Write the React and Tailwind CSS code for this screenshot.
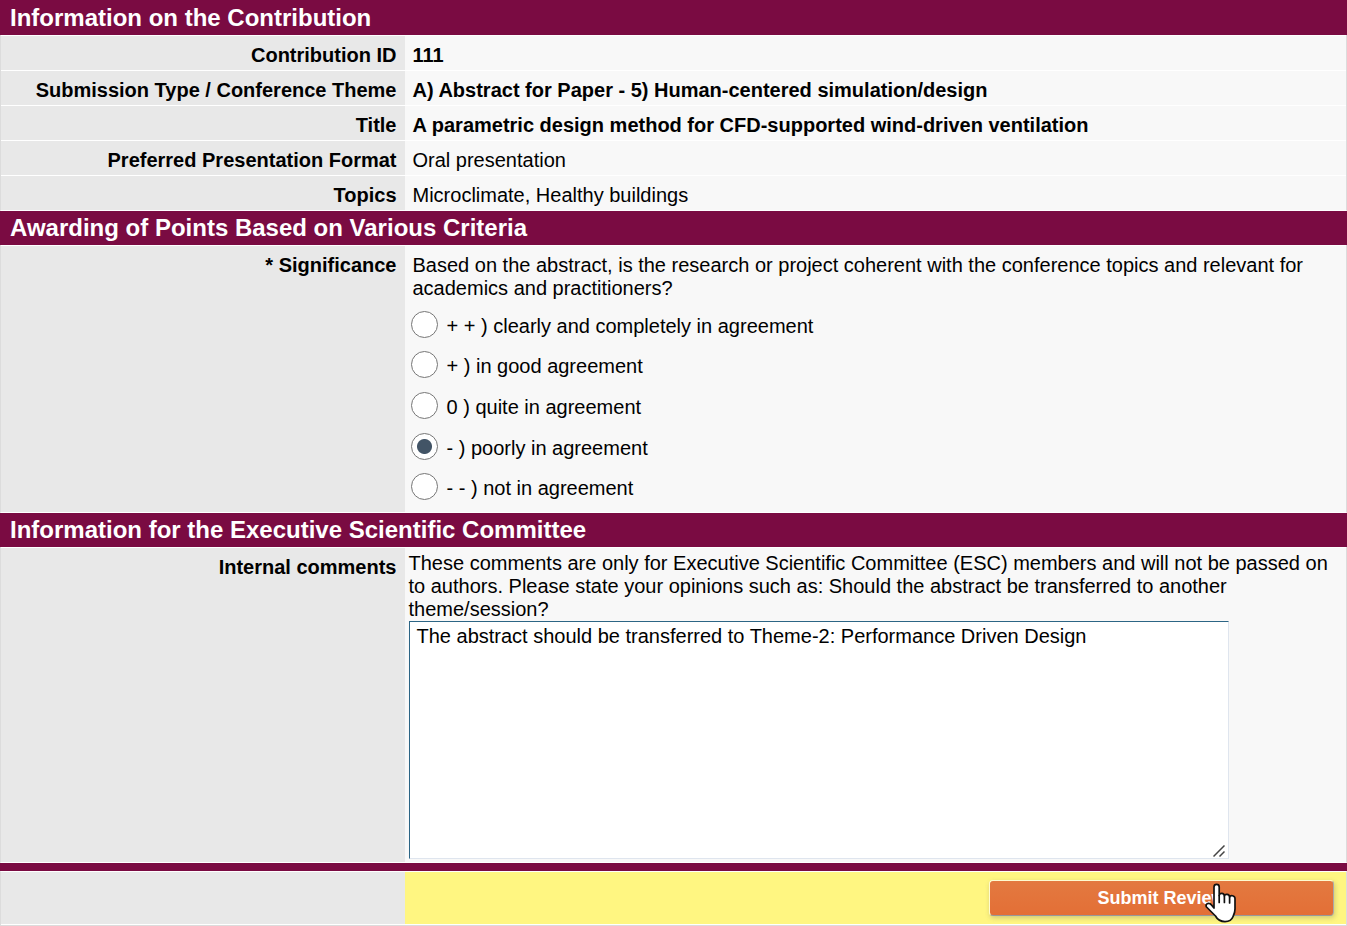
import React from "react";

const details = [
  { label: "Contribution ID", value: "111", strong: true },
  {
    label: "Submission Type / Conference Theme",
    value: "A) Abstract for Paper - 5) Human-centered simulation/design",
    strong: true,
  },
  {
    label: "Title",
    value: "A parametric design method for CFD-supported wind-driven ventilation",
    strong: true,
  },
  { label: "Preferred Presentation Format", value: "Oral presentation" },
  { label: "Topics", value: "Microclimate, Healthy buildings" },
];

const ratings = [
  "+ + ) clearly and completely in agreement",
  "+ ) in good agreement",
  "0 ) quite in agreement",
  "- ) poorly in agreement",
  "- - ) not in agreement",
];

function SectionTitle({ children }) {
  return (
    <h2 className="bg-[#7a0b42] px-2.5 py-px text-2xl leading-8 font-bold text-white">
      {children}
    </h2>
  );
}

function Frame({ children }) {
  return <div className="border-x border-b border-x-[#dcdcdc] border-b-white">{children}</div>;
}

function HandCursor() {
  return (
    <svg
      aria-hidden="true"
      className="pointer-events-none absolute top-[3px] left-[216px] h-10 w-8"
      viewBox="0 0 32 40"
      fill="white"
      stroke="#111"
      strokeWidth="1.7"
      strokeLinejoin="round"
      strokeLinecap="round"
    >
      <path d="M9 23V4C9 .6 14.200.6 14.200 4v8.500c.3-2.800 5-2.800 5.200.4.500-2.300 5-2 5.200 1 .6-2 5.400-1.700 5.400 1.600V26c0 3-.8 5-1.800 7.200-1.400 3.800-4.400 5.400-8.200 5.400-4.200 0-7.500-1.800-9.500-5.600L1.500 24c-1.400-2.500 1.500-4.600 3.700-3.200C6.800 22 7.800 23.500 9 25z" />
      <path d="M14.200 12.500v7M19.400 13v6.500M24.600 14v6" fill="none" />
    </svg>
  );
}

export default function App() {
  return (
    <form
      className="w-full bg-white font-['Liberation_Sans',Arial,sans-serif] text-xl leading-[23px] text-black"
      onSubmit={(e) => e.preventDefault()}
    >
      <section>
        <h2 className="bg-[#7a0b42] px-2.5 pt-0.5 pb-px text-2xl leading-8 font-bold text-white">
          Information on the Contribution
        </h2>
        <Frame>
          <table className="w-full table-fixed border-collapse">
            <tbody>
              {details.map((d) => (
                <tr key={d.label} className="border-t border-white">
                  <th
                    scope="row"
                    className="w-[30%] bg-[#e8e8e8] pt-2 pr-2 pb-[3px] text-right font-bold"
                  >
                    {d.label}
                  </th>
                  <td
                    className={
                      d.strong
                        ? "bg-[#f8f8f8] px-2 pt-2 pb-[3px] font-bold"
                        : "bg-[#f8f8f8] px-2 pt-2 pb-[3px]"
                    }
                  >
                    {d.value}
                  </td>
                </tr>
              ))}
            </tbody>
          </table>
        </Frame>
      </section>

      <section>
        <SectionTitle>Awarding of Points Based on Various Criteria</SectionTitle>
        <Frame>
          <div
            role="radiogroup"
            aria-labelledby="significance"
            className="grid grid-cols-[30%_1fr] border-t border-white"
          >
            <div id="significance" className="bg-[#e8e8e8] pt-2 pr-2 text-right font-bold">
              * Significance
            </div>
            <div className="bg-[#f8f8f8] pt-2 pb-[5px]">
              <p className="px-2">
                Based on the abstract, is the research or project coherent with the conference
                topics and relevant for academics and practitioners?
              </p>
              <div className="mt-1 grid h-[203px] grid-rows-5 px-1.5">
                {ratings.map((r, i) => (
                  <label key={r} className="flex items-center gap-[9px]">
                    <input
                      type="radio"
                      name="rating"
                      defaultChecked={i === 3}
                      className="size-[27px] shrink-0 appearance-none rounded-full border border-[#767676] bg-white checked:bg-[radial-gradient(circle,#425466_7px,white_8px)]"
                    />
                    <span className="pt-1">{r}</span>
                  </label>
                ))}
              </div>
            </div>
          </div>
        </Frame>
      </section>

      <section>
        <SectionTitle>Information for the Executive Scientific Committee</SectionTitle>
        <Frame>
          <div className="grid grid-cols-[30%_1fr] border-t border-white">
            <label
              htmlFor="comments"
              className="bg-[#e8e8e8] pt-2 pr-2 text-right font-bold"
            >
              Internal comments
            </label>
            <div className="bg-[#f8f8f8] px-1 pt-1 pb-[3px]">
              <p>
                These comments are only for Executive Scientific Committee (ESC) members and will
                not be passed on to authors. Please state your opinions such as: Should the
                abstract be transferred to another theme/session?
              </p>
              <div className="relative w-full max-w-[820px]">
                <textarea
                  id="comments"
                  defaultValue="The abstract should be transferred to Theme-2: Performance Driven Design"
                  className="block h-[238px] w-full resize-none border border-t-[#2c6585] border-r-[#dfe5ee] border-b-[#dfe5ee] border-l-[#2c6585] bg-white px-[7px] py-[3px] outline-none"
                />
                <svg
                  aria-hidden="true"
                  className="absolute right-1 bottom-0.5 size-3"
                  viewBox="0 0 12 12"
                  fill="none"
                  stroke="#444"
                  strokeWidth="1.5"
                >
                  <path d="M.5 11.500 11.500 .5M6.500 11.500 11.500 6.500" />
                </svg>
              </div>
            </div>
          </div>
        </Frame>
      </section>

      <div className="h-2 bg-[#7a0b42]" />
      <div className="grid grid-cols-[30%_1fr] border border-x-[#dcdcdc] border-t-white border-b-[#dcdcdc] pb-px">
        <div className="bg-[#e8e8e8]" />
        <div className="flex justify-end bg-[#fff681] px-3 py-2">
          <div className="relative w-[345px]">
            <button
              type="submit"
              className="h-9 w-full cursor-pointer rounded border border-t-[#fffbd0] border-r-[#aaa] border-b-[#999] border-l-[#fffbd0] bg-linear-to-b from-[#e37940] to-[#e36f36] text-lg font-bold text-white shadow-[1px_2px_5px_rgba(100,100,100,0.3)]"
            >
              Submit Review
            </button>
            <HandCursor />
          </div>
        </div>
      </div>
    </form>
  );
}
